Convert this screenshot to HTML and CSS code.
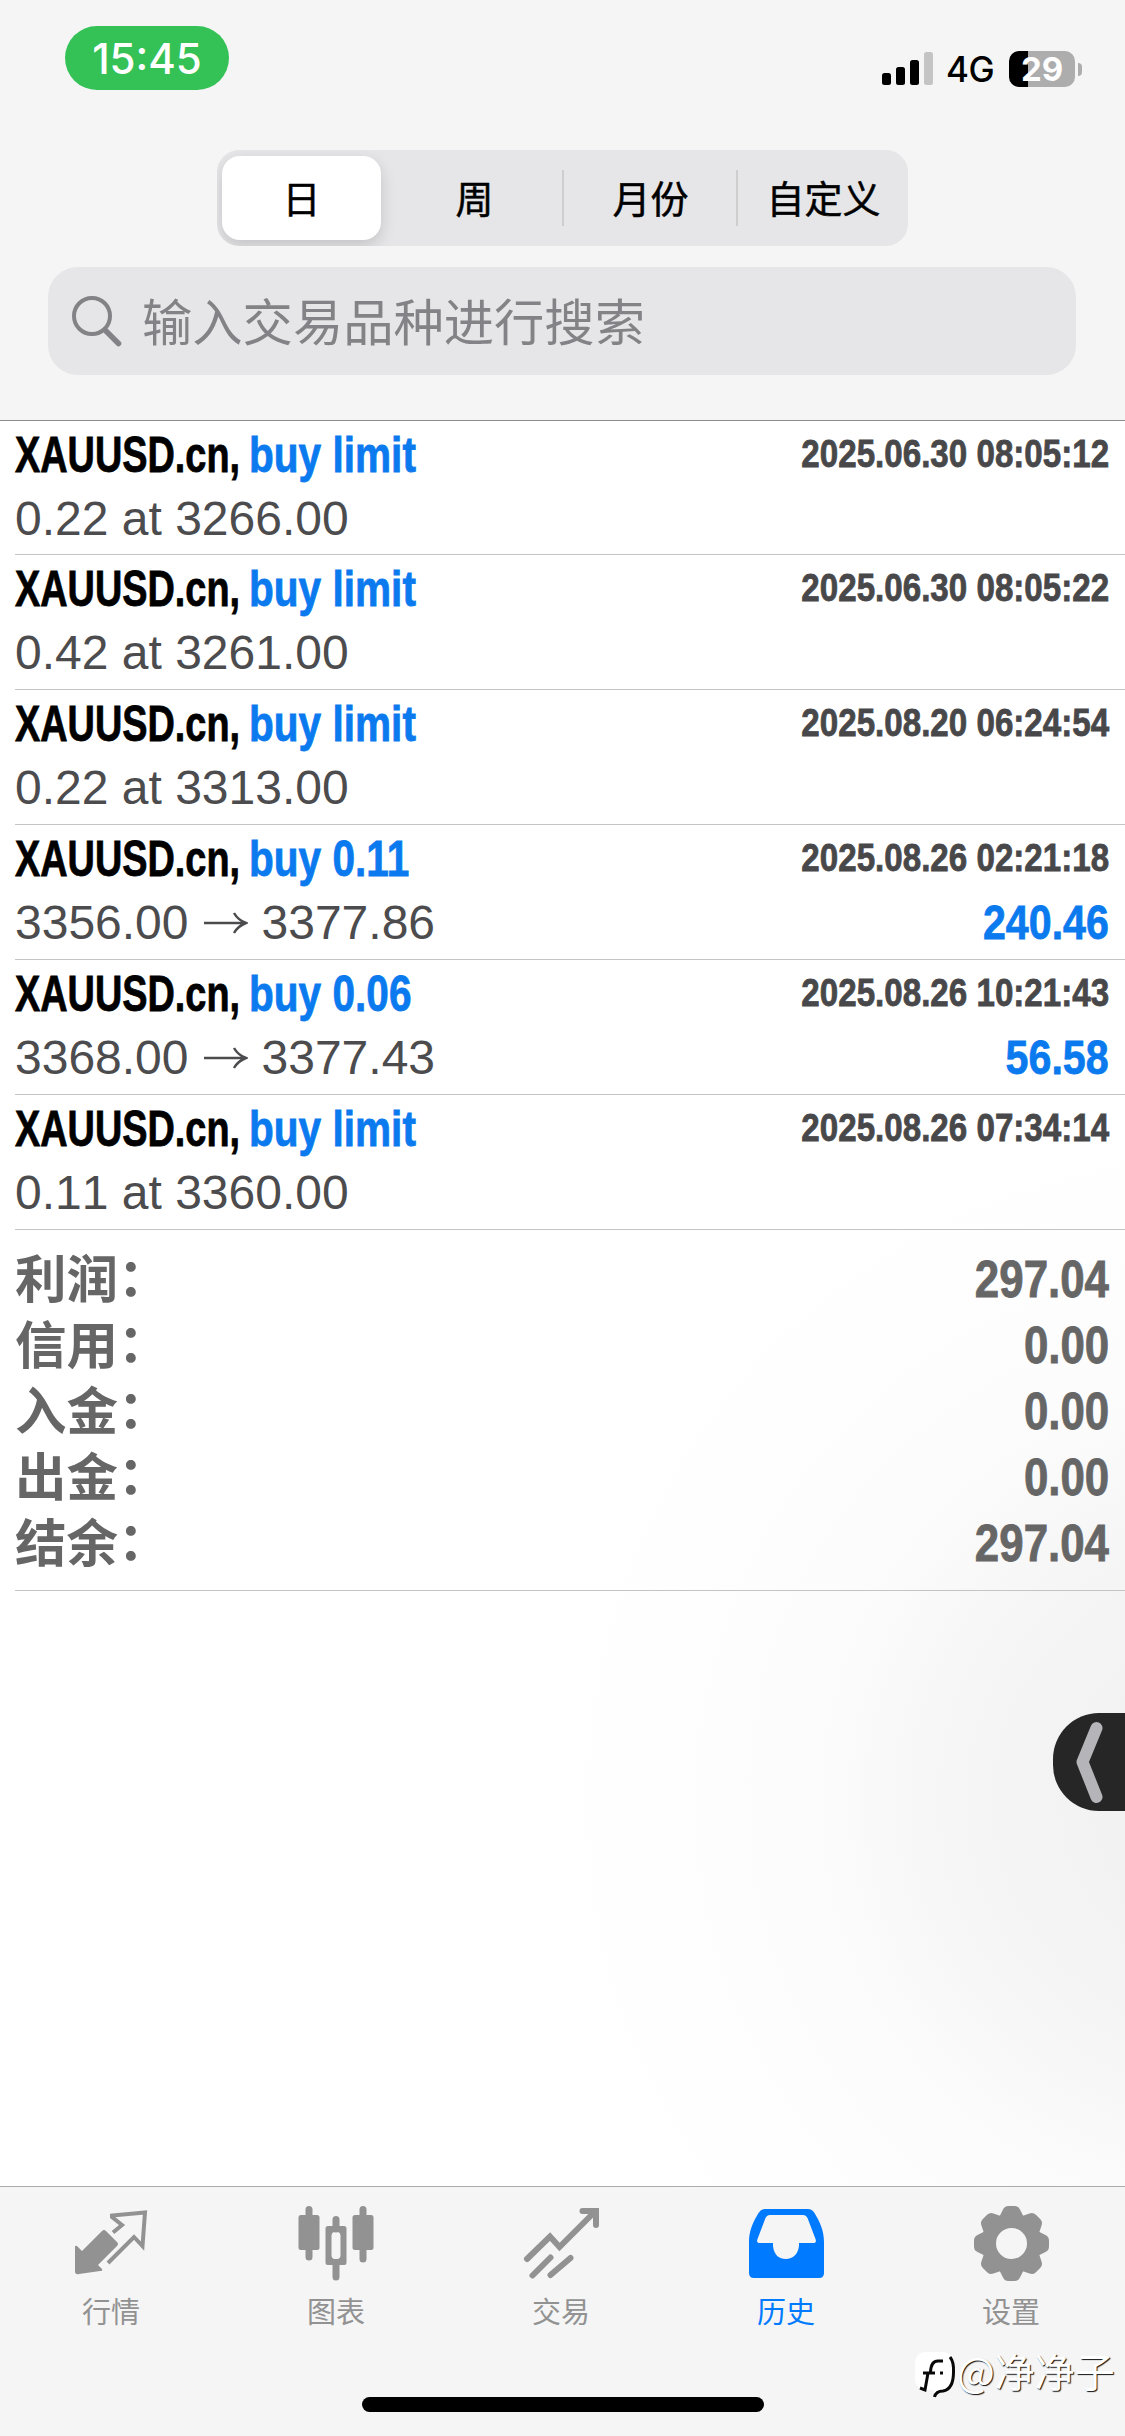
FILE: index.html
```html
<!DOCTYPE html>
<html lang="zh-CN">
<head>
<meta charset="utf-8">
<meta name="viewport" content="width=device-width">
<title>历史</title>
<link rel="stylesheet" href="styles.css">
</head>
<body>
<div class="screen">
  <header class="header">
    <div class="status">
      <div class="time">15:45</div>
      <div class="status-right">
        <svg class="signal" width="52" height="36" viewBox="0 0 52 36"><rect x="0" y="22" width="9" height="12" rx="2.5"/><rect x="14" y="16" width="9" height="18" rx="2.5"/><rect x="28" y="9" width="9" height="25" rx="2.5"/><rect x="42" y="1" width="9" height="33" rx="2.5" fill="#c4c4c4"/></svg>
        <span class="network">4G</span>
        <div class="battery"><span class="battery-level">29</span></div>
        <span class="battery-tip"></span>
      </div>
    </div>
    <nav class="segments">
      <span class="segment selected">日</span>
      <span class="segment">周</span>
      <span class="segment divided">月份</span>
      <span class="segment divided">自定义</span>
    </nav>
    <div class="search">
      <svg width="50" height="52" viewBox="0 0 50 52" fill="none" stroke="#838387"><circle cx="20" cy="21" r="18" stroke-width="4"/><path d="M33 35L46.500 48.500" stroke-width="5.500" stroke-linecap="round"/></svg>
      <span>输入交易品种进行搜索</span>
    </div>
  </header>
  <main class="content">
    <section class="deals">
      <article class="deal"><div class="line"><div class="title"><span>XAUUSD.cn,</span><b>buy limit</b></div><time>2025.06.30 08:05:12</time></div><div class="line second"><span class="price">0.22 at 3266.00</span></div></article>
      <article class="deal"><div class="line"><div class="title"><span>XAUUSD.cn,</span><b>buy limit</b></div><time>2025.06.30 08:05:22</time></div><div class="line second"><span class="price">0.42 at 3261.00</span></div></article>
      <article class="deal"><div class="line"><div class="title"><span>XAUUSD.cn,</span><b>buy limit</b></div><time>2025.08.20 06:24:54</time></div><div class="line second"><span class="price">0.22 at 3313.00</span></div></article>
      <article class="deal"><div class="line"><div class="title"><span>XAUUSD.cn,</span><b>buy 0.11</b></div><time>2025.08.26 02:21:18</time></div><div class="line second"><span class="price">3356.00<svg class="arrow" width="44" height="24" viewBox="0 0 44 24"><path d="M0 12H41M30 2Q34 9 42 12Q34 15 30 22" fill="none" stroke="#4c4c4e" stroke-width="2.500"/></svg>3377.86</span><span class="profit">240.46</span></div></article>
      <article class="deal"><div class="line"><div class="title"><span>XAUUSD.cn,</span><b>buy 0.06</b></div><time>2025.08.26 10:21:43</time></div><div class="line second"><span class="price">3368.00<svg class="arrow" width="44" height="24" viewBox="0 0 44 24"><path d="M0 12H41M30 2Q34 9 42 12Q34 15 30 22" fill="none" stroke="#4c4c4e" stroke-width="2.500"/></svg>3377.43</span><span class="profit">56.58</span></div></article>
      <article class="deal"><div class="line"><div class="title"><span>XAUUSD.cn,</span><b>buy limit</b></div><time>2025.08.26 07:34:14</time></div><div class="line second"><span class="price">0.11 at 3360.00</span></div></article>
    </section>
    <section class="totals">
      <div class="total"><span class="label">利润<i>：</i></span><span class="sum">297.04</span></div>
      <div class="total"><span class="label">信用<i>：</i></span><span class="sum">0.00</span></div>
      <div class="total"><span class="label">入金<i>：</i></span><span class="sum">0.00</span></div>
      <div class="total"><span class="label">出金<i>：</i></span><span class="sum">0.00</span></div>
      <div class="total"><span class="label">结余<i>：</i></span><span class="sum">297.04</span></div>
    </section>
  </main>
  <nav class="tabs">
    <a class="tab"><svg width="80" height="80" viewBox="0 0 80 80"><g transform="translate(4 1)"><path d="M0 39Q0 37 2 38L7 43L27 23Q29 21 31 23L42 34Q44 36 42 38L23 57L27 61Q28 63 25 63L4 66Q0 67 0 63Z" fill="#929292"/><path d="M38 24.500L47 17L37 9V7.500L70 4.500L67.500 38L59 29L33 55" fill="none" stroke="#929292" stroke-width="4"/></g></svg><span>行情</span></a>
    <a class="tab"><svg width="80" height="80" viewBox="0 0 80 80" fill="#929292"><rect x="2.500" y="8" width="21" height="35" rx="2.500"/><rect x="56.500" y="8" width="21" height="35" rx="2.500"/><path d="M13 2.500V50M67 2.500V52M40 12.500V22M40 57V70" stroke="#929292" stroke-width="7" stroke-linecap="round"/><path fill-rule="evenodd" d="M32 19H48Q50.500 19 50.500 21.500V55.500Q50.500 58 48 58H32Q29.500 58 29.500 55.500V21.500Q29.500 19 32 19ZM39 25Q35.500 25 35.500 29V48Q35.500 52 39 52H41Q44.500 52 44.500 48V29Q44.500 25 41 25Z"/></svg><span>图表</span></a>
    <a class="tab"><svg width="80" height="80" viewBox="0 0 80 80" fill="none" stroke="#929292" stroke-width="6"><g transform="translate(.5 1)"><path d="M5.500 51L28.500 28.500L38 39L73 4" stroke-linecap="round"/><path d="M61 3H74.500V17" stroke-linecap="round"/><path d="M11 67.500L29 49.500M29 67L49 50" stroke-linecap="round"/></g></svg><span>交易</span></a>
    <a class="tab active"><svg width="80" height="80" viewBox="0 0 80 80"><path transform="translate(0 1)" fill="#007aff" fill-rule="evenodd" d="M19 1H62Q66 1 68.500 5C74 14 78 23 78 34V65Q78 70 73 70H8Q3 70 3 65V34C3 23 7 14 12.500 5Q15 1 19 1ZM24 7Q21 7 19.500 10L11.500 31Q10 35 14 35H27V38C28 47 33 51 40 51C47 51 52 46 53 38V35H67Q71 35 69.500 31L61.500 10Q60 7 57 7Z"/></svg><span>历史</span></a>
    <a class="tab"><svg width="80" height="80" viewBox="0 0 80 80"><g transform="translate(40.500 36.500)" fill="#929292"><g id="teeth"><path id="tooth" d="M-13 -25L-8.500 -34Q-7 -37.500 -3 -37.500H3Q7 -37.500 8.500 -34L13 -25Z"/><use href="#tooth" transform="rotate(45)"/><use href="#tooth" transform="rotate(90)"/><use href="#tooth" transform="rotate(135)"/></g><use href="#teeth" transform="rotate(180)"/><circle r="22" fill="none" stroke="#929292" stroke-width="13"/></g></svg><span>设置</span></a>
  </nav>
  <div class="home-indicator"></div>
  <div class="side-handle"><svg width="72" height="98" viewBox="0 0 72 98"><path d="M43.500 15L29.500 49L43.500 84" fill="none" stroke="#b5b4b9" stroke-width="12" stroke-linecap="round" stroke-linejoin="round"/></svg></div>
  <div class="watermark"><svg width="42" height="48" viewBox="0 0 42 48"><path d="M10 0H28Q39 1 39 12V26Q38 38 27 38L20 44L18 38H9Q0 36 0 27V10Q1 1 10 0Z" fill="#fff"/><path d="M35 5Q39 10 38.500 20C38.500 33 34 38 28 39Q21 39 19.500 45M28 9H23Q16 9 15.500 20M8 21H20M13 21L10 38L5 36M25 21H28" fill="none" stroke="#080808" stroke-width="3"/></svg><span>@净净子</span></div>
</div>
</body>
</html>
```
FILE: styles.css
```css
* { box-sizing: border-box; }
body { margin: 0; }

.screen {
  position: relative;
  display: flex;
  flex-direction: column;
  width: 1125px;
  height: 2436px;
  overflow: hidden;
  background: #fff;
  font-family: "Liberation Sans", "Noto Sans CJK SC", sans-serif;
}

.header {
  display: flex;
  flex-direction: column;
  height: 421px;
  flex: none;
  background: #f5f5f5;
  border-bottom: 1px solid #8c8c8e;
}

.status {
  display: flex;
  justify-content: space-between;
  height: 150px;
  padding: 26px 43px 0 65px;
  font-family: Inter, sans-serif;
}
.time {
  width: 164px;
  height: 64px;
  border-radius: 32px;
  background: #34c257;
  color: #fff;
  font-size: 42px;
  font-weight: 500;
  line-height: 65px;
  text-align: center;
}
.status-right { display: flex; align-items: center; height: 86px; }
.network { width: 54px; margin-left: 12px; font-size: 35px; font-weight: 500; letter-spacing: -.5px; white-space: nowrap; }
.battery {
  width: 66px;
  height: 36px;
  margin-left: 9px;
  border-radius: 10px;
  background: linear-gradient(90deg, #000 19px, #adadad 19px);
  color: #fff;
  font-size: 33px;
  font-weight: 700;
  line-height: 36px;
  text-align: center;
}
.battery-tip { width: 4px; height: 13px; margin-left: 3px; border-radius: 0 4px 4px 0; background: #adadad; }

.segments {
  display: grid;
  grid-template-columns: 165px 175px 174px 172px;
  align-self: flex-start;
  width: 691px;
  height: 96px;
  margin-left: 217px;
  padding: 6px 0 6px 5px;
  border-radius: 22px;
  background: #e6e6e8;
  overflow: hidden;
}
.segment {
  height: 84px;
  color: #000;
  font: 400 38px/82px "Noto Sans CJK SC", sans-serif;
  -webkit-text-stroke: .5px #000;
  text-align: center;
}
.selected { width: 159px; border-radius: 18px; background: #fff; box-shadow: 0 6px 16px rgba(0, 0, 0, .15); }
.divided { padding-left: 3px; background: linear-gradient(#cecece, #cecece) 0 50% / 2px 56px no-repeat; }

.search {
  display: flex;
  align-items: center;
  width: 1028px;
  height: 108px;
  margin: 21px 0 0 48px;
  padding-left: 24px;
  border-radius: 30px;
  background: #e6e6e8;
  color: #838387;
  font-family: "Noto Sans CJK SC", sans-serif;
  font-size: 50.300px;
}
.search span { height: 108px; margin-left: 20px; line-height: 105px; }

.content {
  flex: 1;
  background: radial-gradient(circle 680px at 1230px 1380px, #f0f0f1, #f5f5f6 38%, #fcfcfc 62%, #fff);
}
.deal { display: flex; flex-direction: column; height: 135px; margin-left: 15px; padding-right: 16px; box-shadow: inset 0 -1px #c4c4c6; }
.deal:first-child { height: 134px; }
.line { display: flex; justify-content: space-between; height: 69px; line-height: 69px; }
.second { height: 57px; line-height: 57px; }

/* condensed bold face, made by narrowing the regular-width bold */
.title, time, .profit, .sum { font-weight: 700; white-space: nowrap; -webkit-text-stroke: .8px currentColor; }
.title { display: flex; font-size: 50px; }
.title span { width: 234px; transform: scaleX(.757); transform-origin: 0 50%; }
.title b { color: #0a7aee; transform: scaleX(.812); transform-origin: 0 50%; }
time { color: #48484a; font-size: 39px; line-height: 66px; transform: scaleX(.85); transform-origin: 100% 50%; }
.profit { color: #0a7aee; font-size: 49px; transform: scaleX(.84); transform-origin: 100% 50%; }
.sum { font-size: 51px; transform: scaleX(.86); transform-origin: 100% 50%; }

.price { display: flex; align-items: center; font-size: 48px; font-kerning: none; color: #4c4c4e; white-space: pre; }
.arrow { margin: 0 14px 0 15px; }

.totals { margin-left: 15px; padding: 17px 16px 12px 0; height: 361px; box-shadow: inset 0 -1px #c4c4c6; }
.total { display: flex; justify-content: space-between; height: 66px; line-height: 66px; color: #666; }
.label { margin-top: -4px; font: 700 51.500px/66px "Noto Sans CJK SC", sans-serif; }
.label i { font-style: normal; line-height: 0; vertical-align: 2px; }

.tabs { display: grid; grid-template-columns: repeat(5, 225px); height: 250px; flex: none; border-top: 1px solid #acacae; background: #f5f5f5; }
.tab { display: flex; flex-direction: column; align-items: center; padding: 20px 3px 0 0; color: #929292; font: 400 29px/40px "Noto Sans CJK SC", sans-serif; }
.tab svg { overflow: visible; }
.tab span { margin-top: 3px; }
.active { color: #007aff; }

.home-indicator { position: absolute; left: 362px; top: 2397px; width: 402px; height: 15px; border-radius: 8px; background: #000; }
.side-handle { position: absolute; left: 1053px; top: 1713px; width: 72px; height: 98px; border-radius: 46px 0 0 46px; background: #262626; }
.watermark { position: absolute; left: 915px; top: 2352px; display: flex; color: #fff; font: 400 40px/36px "Noto Sans CJK SC", sans-serif; text-shadow: 1px 1px 1px #111; }
```
